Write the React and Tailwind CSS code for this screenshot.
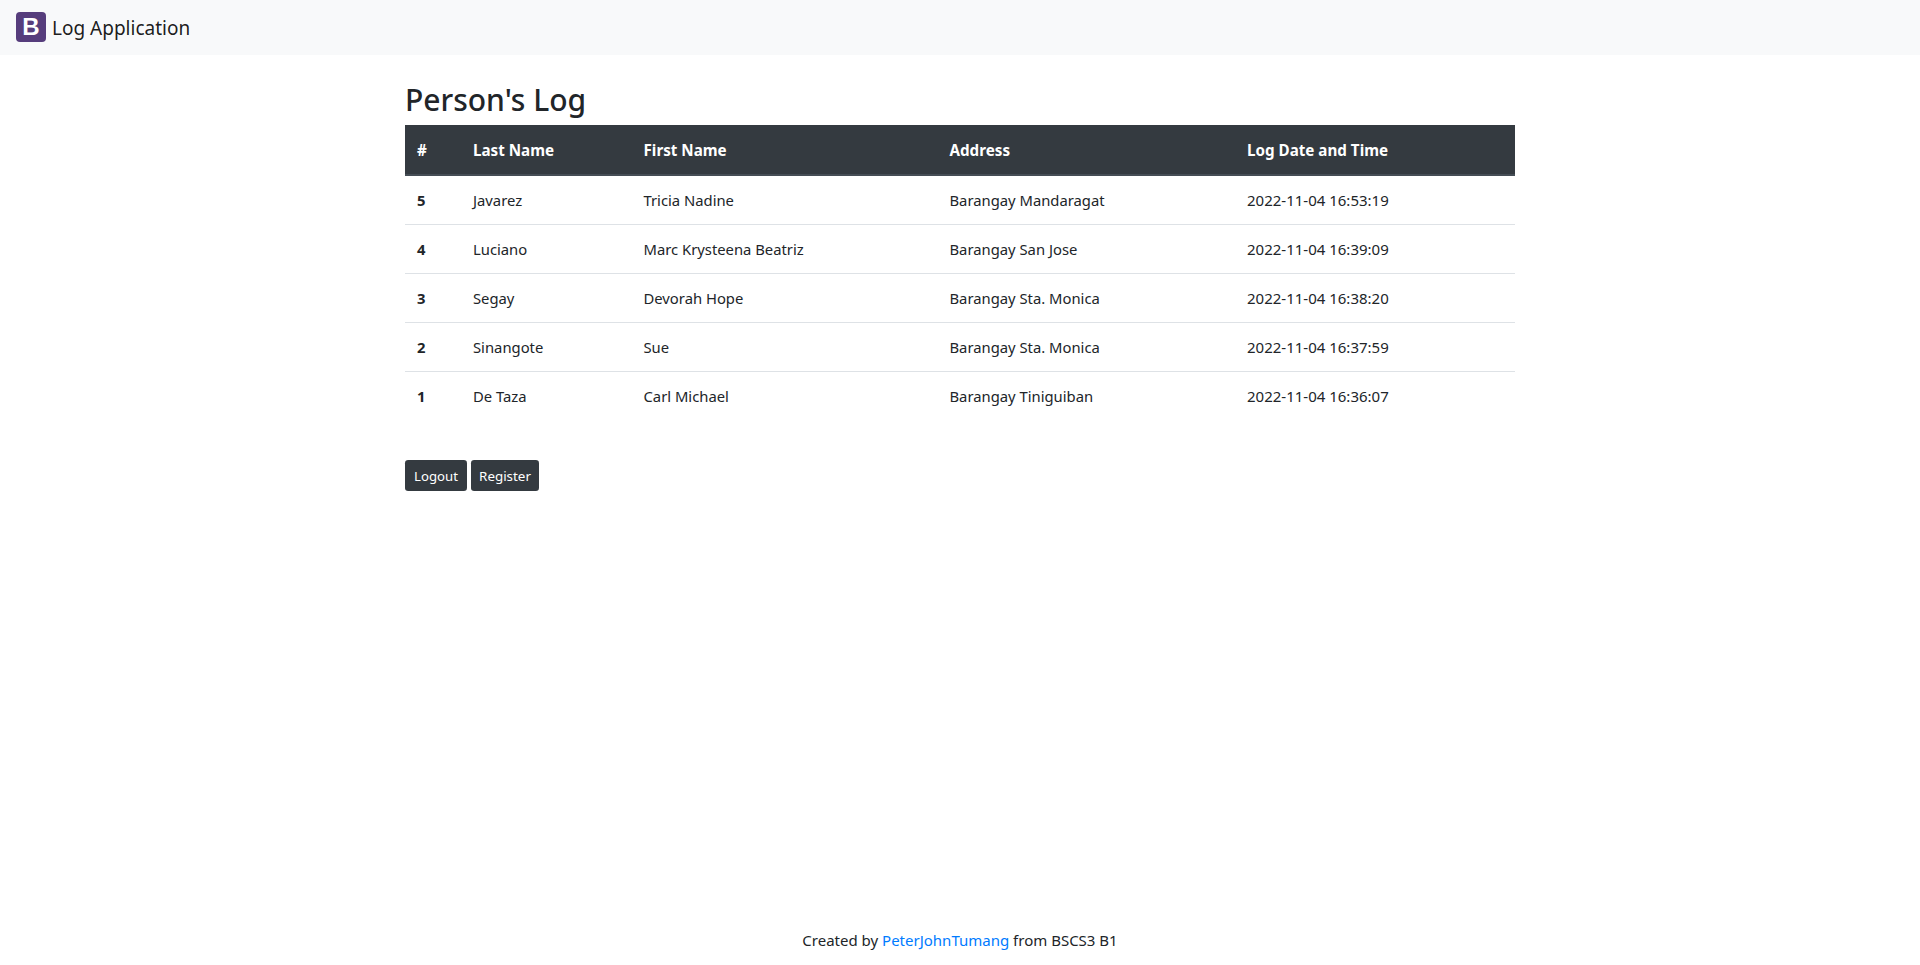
import React from 'react';

const LOGS = [
  { id: 5, last: 'Javarez', first: 'Tricia Nadine', address: 'Barangay Mandaragat', date: '2022-11-04 16:53:19' },
  { id: 4, last: 'Luciano', first: 'Marc Krysteena Beatriz', address: 'Barangay San Jose', date: '2022-11-04 16:39:09' },
  { id: 3, last: 'Segay', first: 'Devorah Hope', address: 'Barangay Sta. Monica', date: '2022-11-04 16:38:20' },
  { id: 2, last: 'Sinangote', first: 'Sue', address: 'Barangay Sta. Monica', date: '2022-11-04 16:37:59' },
  { id: 1, last: 'De Taza', first: 'Carl Michael', address: 'Barangay Tiniguiban', date: '2022-11-04 16:36:07' },
];

const HEADERS = ['#', 'Last Name', 'First Name', 'Address', 'Log Date and Time'];

export default function App() {
  return (
    <div className="min-h-[965px] flex flex-col bg-white text-[#212529] font-['Noto_Sans',sans-serif] text-[15px] leading-6">
      <nav className="h-[55px] bg-[#f8f9fa] flex items-start pt-3 px-4">
        <span className="w-[30px] h-[30px] rounded-[4px] bg-[#563d7c] flex items-center justify-center text-white font-bold text-[24px] leading-none font-['Liberation_Sans',sans-serif]">
          B
        </span>
        <span className="ml-[6px] text-[19px] leading-[32px] text-black/90">Log Application</span>
      </nav>

      <main className="w-[1110px] mx-auto flex-1">
        <h1 className="text-[30px] leading-[38px] font-medium mt-[26px] mb-[6px]">Person's Log</h1>
        <table className="w-full table-fixed border-collapse">
          <colgroup>
            <col className="w-[56px]" />
            <col className="w-[170.5px]" />
            <col className="w-[306px]" />
            <col className="w-[297.5px]" />
            <col className="w-[280px]" />
          </colgroup>
          <thead>
            <tr className="bg-[#343a40] text-white border-b-2 border-[#454d55]">
              {HEADERS.map((h) => (
                <th key={h} className="text-left font-bold px-3 pt-[13px] pb-3 text-[15.2px]">{h}</th>
              ))}
            </tr>
          </thead>
          <tbody>
            {LOGS.map((row, idx) => (
              <tr key={row.id} className={idx > 0 ? 'border-t border-[#dee2e6]' : ''}>
                <th className="text-left font-bold p-3 text-[14.8px]">{row.id}</th>
                <td className="p-3 text-[14.8px]">{row.last}</td>
                <td className="p-3 text-[14.8px]">{row.first}</td>
                <td className="p-3 text-[14.8px]">{row.address}</td>
                <td className="p-3 text-[15px]">{row.date}</td>
              </tr>
            ))}
          </tbody>
        </table>
        <div className="mt-[40px] flex gap-1">
          <button className="h-[31px] w-[62px] rounded-[3.2px] bg-[#343a40] text-white text-[13.2px]">Logout</button>
          <button className="h-[31px] w-[68px] rounded-[3.2px] bg-[#343a40] text-white text-[13.4px]">Register</button>
        </div>
      </main>

      <footer className="h-[50px] text-center pt-[13px] text-[15px]">
        Created by <a href="#" className="text-[#007bff]">PeterJohnTumang</a> from BSCS3 B1
      </footer>
    </div>
  );
}
